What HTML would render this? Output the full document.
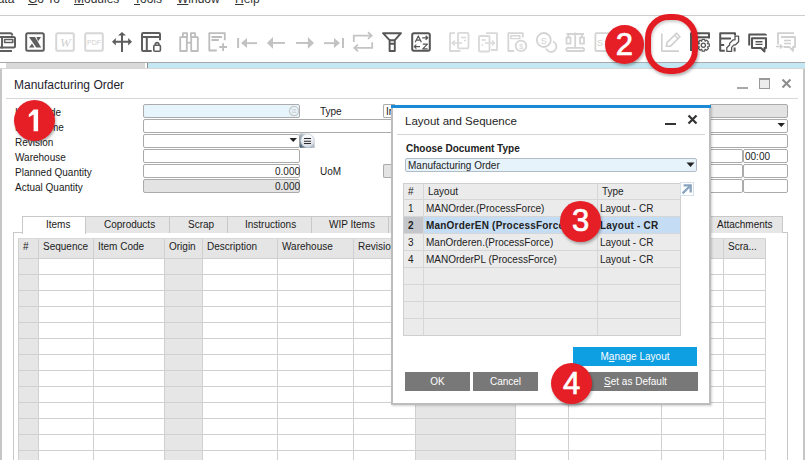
<!DOCTYPE html>
<html><head><meta charset="utf-8">
<style>
*{margin:0;padding:0;box-sizing:border-box}
html,body{width:805px;height:460px;overflow:hidden;background:#fff}
body{position:relative;font-family:"Liberation Sans",sans-serif;font-size:10px;color:#222}
.a{position:absolute}
.t{position:absolute;white-space:nowrap;line-height:12px;font-size:10px}
.menu{position:absolute;top:-8px;font-size:12px;line-height:14px;color:#333;white-space:nowrap}
.menu u{text-decoration:underline}
.hl{position:absolute;height:1px}
.vl{position:absolute;width:1px}
.fld{position:absolute;height:14px;border:1px solid #ababab;border-radius:2px;background:#fff}
.lab{position:absolute;left:15px;font-size:10px;line-height:15px;height:15px;white-space:nowrap;color:#1a1a1a}
.tab{position:absolute;top:216px;height:17px;background:#e6e6e6;border:1px solid #c8c8c8;border-bottom:none}
.tabt{position:absolute;top:219px;font-size:10px;line-height:12px;white-space:nowrap;color:#1a1a1a}
.circ{position:absolute;border-radius:50%;background:#e61f27;box-shadow:1px 2px 3px rgba(0,0,0,.3);color:#fff;text-align:center;font-size:31px;-webkit-text-stroke:0.7px #fff}
.btn{position:absolute;background:#787878;color:#fff;font-size:10px;text-align:center;line-height:19px;height:19px}
</style></head><body>

<!-- MENU -->
<div class="menu" style="left:-11px">Data</div>
<div class="menu" style="left:28px"><u>G</u>o To</div>
<div class="menu" style="left:74px"><u>M</u>odules</div>
<div class="menu" style="left:134px"><u>T</u>ools</div>
<div class="menu" style="left:177px"><u>W</u>indow</div>
<div class="menu" style="left:235px"><u>H</u>elp</div>
<div class="hl" style="left:0;top:15px;width:805px;background:#cdcdcd"></div>

<!-- TOOLBAR placeholder -->
<!--toolbar-->
<svg class="a" style="left:0;top:0" width="805" height="62" viewBox="0 0 805 62">
<g fill="none" stroke-linejoin="round">
<!-- printer (dark) -->
<g stroke="#5e5e5e" stroke-width="2">
<path d="M-2 33.3H10.5Q12 33.3 12.3 35.5"/>
<rect x="-4" y="36.9" width="19" height="10.6" rx="1.5"/>
<path d="M2 37V48.5"/>
<rect x="4.6" y="39.4" width="8.2" height="3.2" stroke-width="1.5"/>
<path d="M-2 51H12"/>
</g>
<!-- excel -->
<rect x="26.2" y="33.2" width="17.6" height="17.6" rx="1.5" stroke="#5e5e5e" stroke-width="2"/>
<path d="M29 37H35L41.2 47.6H36.2Z" fill="#5e5e5e"/>
<path d="M36.5 37H41L38 41.5Z M29 47.6L32 43.5L34.5 47.6Z" fill="#5e5e5e"/>
<!-- word (disabled) -->
<rect x="56.2" y="33.2" width="17.6" height="17.6" rx="1.5" stroke="#d6d6d6" stroke-width="2"/>
<text x="65.5" y="46.8" font-family="Liberation Serif" font-style="italic" font-size="13" fill="#d0d0d0" text-anchor="middle">W</text>
<!-- pdf -->
<rect x="85.2" y="33.2" width="17.6" height="17.6" rx="1.5" stroke="#d6d6d6" stroke-width="2"/>
<text x="94" y="44.8" font-family="Liberation Sans" font-size="7" fill="#d2d2d2" text-anchor="middle">PDF</text>
<!-- move -->
<g stroke="#5e5e5e" stroke-width="2"><path d="M122 35V52M114 41.8H130"/></g>
<path d="M118 35.6L122 32L126 35.6Z M112 41.8L115.8 38V45.6Z M132 41.8L128.2 38V45.6Z" fill="#5e5e5e"/>
<!-- lock table -->
<g stroke="#5e5e5e" stroke-width="2">
<path d="M160 40.3V34.2Q160 33 158.8 33H143.2Q142 33 142 34.2V49.8Q142 51 143.2 51H151.7"/>
<path d="M142 37H160M146.8 37V51"/>
<rect x="153.8" y="45.2" width="6.6" height="6" rx="1" stroke-width="1.6"/>
<path d="M155.3 45.2V43.8Q157.1 41.5 158.9 43.8V45.2" stroke-width="1.6"/>
</g>
<!-- binoculars -->
<g stroke="#bdbdbd" stroke-width="1.8">
<rect x="182.9" y="33.2" width="4.2" height="4"/>
<rect x="190.9" y="33.2" width="4.2" height="4"/>
<rect x="180.2" y="37.2" width="6.6" height="13.8"/>
<rect x="191.2" y="37.2" width="6.6" height="13.8"/>
<path d="M186.8 42.7H191.2"/>
</g>
<!-- new doc + -->
<g stroke="#bdbdbd" stroke-width="1.8">
<path d="M224.8 40.3V33.2H209.3V50.5H216.8"/>
<path d="M211.5 37H222M211.5 40H218.8M219.3 47H227M223.1 43.2V51"/>
</g>
<!-- first / prev / next / last -->
<g fill="#c2c2c2">
<rect x="237.1" y="38" width="2" height="10"/>
<path d="M241 43L247 38V48Z"/><rect x="246" y="42.2" width="11" height="1.9"/>
<path d="M266.9 42.9L273 37.1V48.7Z"/><rect x="272" y="42" width="13" height="1.9"/>
<path d="M314 42.9L307.9 37.1V48.7Z"/><rect x="296" y="42" width="13" height="1.9"/>
<path d="M340 43L334 38V48Z"/><rect x="324" y="42.2" width="11" height="1.9"/>
<rect x="342" y="38" width="2" height="10"/>
</g>
<!-- refresh -->
<g stroke="#c4c4c4" stroke-width="1.8">
<path d="M353.8 42V35.6H371.5M368 32.3L371.8 35.6L368 38.9"/>
<path d="M372.2 42.2V47.9H354.5M358 44.6L354.2 47.9L358 51.2"/>
</g>
<!-- filter -->
<g stroke="#555" stroke-width="1.9">
<path d="M383 33.2H401L394.8 40.2V51H389.6V40.2Z"/>
<path d="M389.6 40.2H394.8M389.6 43.7H394.8"/>
</g>
<!-- sort -->
<rect x="412.2" y="33.2" width="17.6" height="17.6" rx="1.8" stroke="#555" stroke-width="2"/>
<g stroke="#555" stroke-width="1.2">
<path d="M415.2 42.3L418.3 36L421.4 42.3M416.2 40.2H420.4"/>
<path d="M422.2 37.8H427.8M425.6 35.8L427.8 37.8L425.6 39.8"/>
<path d="M414.2 46.6H420M416.4 44.6L414.2 46.6L416.4 48.6"/>
<path d="M422.8 44.2H427.4L422.8 48.8H427.6"/>
</g>
<!-- base doc -->
<g stroke="#d9d9d9" stroke-width="1.8">
<path d="M455 33.2H450V51H460.5"/>
<rect x="458" y="32.8" width="10.5" height="15.5" rx="1"/>
<path d="M452 43H462M455 40.5L452 43L455 45.5M461 37.5H466M464 40.5H466" stroke-width="1.4"/>
</g>
<!-- target doc -->
<g stroke="#d9d9d9" stroke-width="1.8">
<path d="M486 33.2H497V50H491"/>
<rect x="479" y="36" width="10.5" height="15.5" rx="1"/>
<path d="M485 43H494.5M492 40.5L494.5 43L492 45.5M481.5 40H486M481.5 45H483" stroke-width="1.4"/>
</g>
<!-- payment -->
<g stroke="#d6d6d6" stroke-width="1.8">
<path d="M522.8 37.5V33.2H508.3V51H514"/>
<rect x="510.8" y="35.8" width="9" height="2.8" stroke-width="1.4"/>
<circle cx="521" cy="45.9" r="5.3"/>
</g>
<text x="521" y="48.8" font-family="Liberation Sans" font-size="7.5" fill="#d4d4d4" text-anchor="middle">$</text>
<!-- coins -->
<g stroke="#d4d4d4" stroke-width="1.8">
<path d="M546 48.5A5.4 5.4 0 1 0 553 41.5"/>
<circle cx="543.8" cy="40" r="7"/>
</g>
<text x="543.8" y="43.5" font-family="Liberation Sans" font-size="9" fill="#d0d0d0" text-anchor="middle">S</text>
<!-- balance -->
<g stroke="#d4d4d4" stroke-width="1.8">
<rect x="566.3" y="47.8" width="17.8" height="3.2" rx="1.6"/>
<path d="M575.2 32.5V47.8M566.5 34H584M568.3 34V37.5M582 34V37.5"/>
<rect x="566.5" y="37.5" width="4" height="6.2"/>
<rect x="580" y="37.5" width="4" height="6.2"/>
</g>
<!-- doc $ -->
<rect x="595.4" y="33.2" width="14" height="17.8" rx="1" stroke="#d4d4d4" stroke-width="1.8"/>
<text x="600" y="45.5" font-family="Liberation Sans" font-size="9" fill="#d0d0d0" text-anchor="middle">S</text>
<!-- pencil -->
<g stroke="#cfcfcf" stroke-width="1.6">
<path d="M661.8 33.6V51.1H679"/>
<path d="M666.3 46.3L667 42.6L676.5 33.2L680 36.7L670.5 46.1Z M674.5 35.2L678 38.7"/>
</g>
<!-- doc gear -->
<g stroke="#555" stroke-width="2">
<path d="M691 51V33.3H709V38.4M691 37.2H709"/>
</g>
<g transform="translate(703.4 45.2)"><path stroke="#555" stroke-width="1.2" d="M4.09 -1.61 L5.86 -1.31 L5.86 1.31 L4.09 1.61 L4.03 1.76 L5.07 3.21 L3.21 5.07 L1.76 4.03 L1.61 4.09 L1.31 5.86 L-1.31 5.86 L-1.61 4.09 L-1.76 4.03 L-3.21 5.07 L-5.07 3.21 L-4.03 1.76 L-4.09 1.61 L-5.86 1.31 L-5.86 -1.31 L-4.09 -1.61 L-4.03 -1.76 L-5.07 -3.21 L-3.21 -5.07 L-1.76 -4.03 L-1.61 -4.09 L-1.31 -5.86 L1.31 -5.86 L1.61 -4.09 L1.76 -4.03 L3.21 -5.07 L5.07 -3.21 L4.03 -1.76Z"/><circle r="2.1" stroke="#555" stroke-width="1.3"/></g>
<!-- doc wrench -->
<g stroke="#555" stroke-width="2">
<path d="M735 35.5V33.3H720.2V50.8H724.8M721 38.4H731M721 45.1H724.2M734.6 47.5V51.6"/>
</g>
<path d="M726.8 51.3V47.8L729.6 45V43.4L733.2 39.8H735V36.2H738.6V41.8L735.6 44.8H734.2L731.6 47.4V51.3Z" stroke="#555" stroke-width="1.3"/>

<!-- chat -->
<g stroke="#555" stroke-width="2">
<path d="M749.2 45.5V34.5H765Q766 34.5 766 35.5"/>
<path d="M752 38.3H766V48H764.5V51.5L761 48H752Z"/>
<path d="M755.5 41.7H762.5M755.5 44.4H762.5" stroke-width="1.4"/>
</g>
<!-- light chat -->
<g stroke="#d0d0d0" stroke-width="1.8">
<path d="M778 44.5V33.2H794"/>
<path d="M781 37H795V47H793V50.8L789.5 47H783.5"/>
<path d="M784 40.5H791M784 43.5H791M776 46.5H782M780 44.5L782.3 46.5L780 48.5" stroke-width="1.3"/>
</g>
</g>
</svg>

<!--/toolbar-->

<!-- TAB STRIP -->
<div class="hl" style="left:0;top:62px;width:805px;background:#a9a9a9"></div>
<div class="a" style="left:6px;top:63px;width:139px;height:5px;background:#d9d9d9"></div>
<div class="a" style="left:147px;top:63px;width:1px;height:5px;background:#8e8e8e"></div>
<div class="a" style="left:148px;top:63px;width:657px;height:5px;background:#c3e7f3"></div>
<div class="a" style="left:0;top:68px;width:805px;height:1px;background:#d6d6d6"></div>

<!-- WINDOW -->
<div class="a" style="left:0;top:69px;width:2px;height:391px;background:#c6c6c6"></div>
<div class="a" style="left:803px;top:69px;width:2px;height:391px;background:#c6c6c6"></div>
<div class="a" style="left:14px;top:78px;font-size:12px;line-height:14px;color:#1e1e2e;white-space:nowrap">Manufacturing Order</div>
<div class="a" style="left:737px;top:87px;width:11px;height:2px;background:#a8a8a8"></div>
<div class="a" style="left:759px;top:78px;width:11px;height:11px;border:1px solid #9a9a9a;border-top-width:2px;background:#ececec"></div>
<svg class="a" style="left:781px;top:78px" width="11" height="11"><path d="M1.5 1.5L9.5 9.5M9.5 1.5L1.5 9.5" stroke="#8c8c8c" stroke-width="2"/></svg>
<div class="hl" style="left:6px;top:98px;width:792px;background:#d8d8d8"></div>

<!-- LABELS -->
<div class="lab" style="top:105px">Item Code</div>
<div class="lab" style="top:120px">Item Name</div>
<div class="lab" style="top:135px">Revision</div>
<div class="lab" style="top:150px">Warehouse</div>
<div class="lab" style="top:165px">Planned Quantity</div>
<div class="lab" style="top:180px">Actual Quantity</div>

<!-- FIELDS -->
<div class="fld" style="left:143px;top:104px;width:157px;background:#e6f4fc"></div>
<svg class="a" style="left:288px;top:105px" width="12" height="12"><circle cx="6" cy="6" r="4.6" fill="none" stroke="#c8c8c8" stroke-width="1.2"/><path d="M3.8 4.8h4.4M3.8 7.2h4.4" stroke="#c8c8c8" stroke-width="1"/></svg>
<div class="fld" style="left:143px;top:119px;width:260px"></div>
<div class="fld" style="left:143px;top:134px;width:157px"></div>
<svg class="a" style="left:289px;top:137px" width="9" height="6"><path d="M0.5 1h7.5l-3.75 4z" fill="#222"/></svg>
<svg class="a" style="left:299px;top:133px" width="17" height="16"><defs><linearGradient id="gsq" x1="0" y1="1" x2="1" y2="0"><stop offset="0" stop-color="#3e5468"/><stop offset=".55" stop-color="#8a9aa8" stop-opacity=".6"/><stop offset="1" stop-color="#fff" stop-opacity="0"/></linearGradient><linearGradient id="gb" x1="0" y1="0" x2="0" y2="1"><stop offset="0" stop-color="#ffffff"/><stop offset="1" stop-color="#d2dae2"/></linearGradient></defs><rect x="0.8" y="0.3" width="15" height="14.5" fill="url(#gsq)"/><circle cx="8.5" cy="7.8" r="6.8" fill="url(#gb)" stroke="#b8c2cc" stroke-width=".6"/><path d="M5 5.5h7M5 8.3h7M5 10.5h7" stroke="#2a2a2a" stroke-width="1.1"/></svg>
<div class="fld" style="left:143px;top:149px;width:157px"></div>
<div class="fld" style="left:143px;top:164px;width:157px"></div>
<div class="t" style="left:275px;top:166px;line-height:12px">0.000</div>
<div class="fld" style="left:143px;top:179px;width:157px;background:#e3e3e3"></div>
<div class="t" style="left:275px;top:181px;line-height:12px">0.000</div>

<div class="lab" style="left:320px;top:104px">Type</div>
<div class="fld" style="left:383px;top:104px;width:12px;border-right:none;border-radius:2px 0 0 2px"></div>
<div class="t" style="left:386px;top:106px">In</div>
<div class="lab" style="left:320px;top:164px">UoM</div>
<div class="fld" style="left:383px;top:164px;width:12px;border-right:none;border-radius:2px 0 0 2px;background:#e3e3e3"></div>

<!-- right fields -->
<div class="fld" style="left:709px;top:104px;width:79px;background:#e3e3e3"></div>
<div class="fld" style="left:709px;top:119px;width:79px"></div>
<svg class="a" style="left:777px;top:122px" width="9" height="6"><path d="M0.5 1h7.5l-3.75 4z" fill="#222"/></svg>
<div class="fld" style="left:709px;top:134px;width:79px"></div>
<div class="fld" style="left:709px;top:149px;width:34px"></div>
<div class="fld" style="left:743px;top:149px;width:45px"></div>
<div class="t" style="left:745px;top:151px">00:00</div>
<div class="fld" style="left:709px;top:164px;width:34px"></div>
<div class="fld" style="left:743px;top:164px;width:45px"></div>
<div class="fld" style="left:709px;top:179px;width:34px"></div>
<div class="fld" style="left:743px;top:179px;width:45px"></div>

<!-- TABS -->
<!--tabs-->

<!--/tabs-->

<!-- GRID -->
<!--grid-->
<div class="a" style="left:13px;top:232px;width:775px;height:240px;border:1px solid #c8c8c8;background:#fff"></div>
<div class="a" style="left:22px;top:216px;width:64px;height:18px;border:1px solid #c8c8c8;border-bottom:none;background:#fff"></div>
<div class="tabt" style="left:46px">Items</div>
<div class="tab" style="left:85px;width:85px"></div>
<div class="tabt" style="left:104px">Coproducts</div>
<div class="tab" style="left:169px;width:59px"></div>
<div class="tabt" style="left:188px">Scrap</div>
<div class="tab" style="left:227px;width:85px"></div>
<div class="tabt" style="left:245px">Instructions</div>
<div class="tab" style="left:311px;width:78px"></div>
<div class="tabt" style="left:329px">WIP Items</div>
<div class="tab" style="left:388px;width:313px"></div>
<div class="tab" style="left:700px;width:83px"></div>
<div class="tabt" style="left:717px">Attachments</div>
<div class="a" style="left:18px;top:238px;width:748px;height:20px;background:#e5e5e5"></div>
<div class="a" style="left:18px;top:258px;width:20px;height:202px;background:#e6e6e6"></div>
<div class="a" style="left:164px;top:258px;width:38px;height:202px;background:#e6e6e6"></div>
<div class="a" style="left:415px;top:258px;width:100px;height:202px;background:#e6e6e6"></div>
<div class="vl" style="left:18px;top:238px;height:222px;background:#d0d0d0"></div>
<div class="vl" style="left:38px;top:238px;height:222px;background:#d0d0d0"></div>
<div class="vl" style="left:93px;top:238px;height:222px;background:#d0d0d0"></div>
<div class="vl" style="left:164px;top:238px;height:222px;background:#d0d0d0"></div>
<div class="vl" style="left:202px;top:238px;height:222px;background:#d0d0d0"></div>
<div class="vl" style="left:277px;top:238px;height:222px;background:#d0d0d0"></div>
<div class="vl" style="left:353px;top:238px;height:222px;background:#d0d0d0"></div>
<div class="vl" style="left:415px;top:238px;height:222px;background:#d0d0d0"></div>
<div class="vl" style="left:515px;top:238px;height:222px;background:#d0d0d0"></div>
<div class="vl" style="left:568px;top:238px;height:222px;background:#d0d0d0"></div>
<div class="vl" style="left:661px;top:238px;height:222px;background:#d0d0d0"></div>
<div class="vl" style="left:723px;top:238px;height:222px;background:#d0d0d0"></div>
<div class="vl" style="left:765px;top:238px;height:222px;background:#d0d0d0"></div>
<div class="hl" style="left:18px;top:238px;width:748px;background:#d8d8d8"></div>
<div class="hl" style="left:18px;top:258px;width:748px;background:#d0d0d0"></div>
<div class="hl" style="left:18px;top:274px;width:748px;background:#d0d0d0"></div>
<div class="hl" style="left:18px;top:290px;width:748px;background:#d0d0d0"></div>
<div class="hl" style="left:18px;top:306px;width:748px;background:#d0d0d0"></div>
<div class="hl" style="left:18px;top:322px;width:748px;background:#d0d0d0"></div>
<div class="hl" style="left:18px;top:338px;width:748px;background:#d0d0d0"></div>
<div class="hl" style="left:18px;top:354px;width:748px;background:#d0d0d0"></div>
<div class="hl" style="left:18px;top:370px;width:748px;background:#d0d0d0"></div>
<div class="hl" style="left:18px;top:386px;width:748px;background:#d0d0d0"></div>
<div class="hl" style="left:18px;top:402px;width:748px;background:#d0d0d0"></div>
<div class="hl" style="left:18px;top:418px;width:748px;background:#d0d0d0"></div>
<div class="hl" style="left:18px;top:434px;width:748px;background:#d0d0d0"></div>
<div class="hl" style="left:18px;top:450px;width:748px;background:#d0d0d0"></div>
<div class="t" style="left:23px;top:241px">#</div>
<div class="t" style="left:43px;top:241px">Sequence</div>
<div class="t" style="left:98px;top:241px">Item Code</div>
<div class="t" style="left:169px;top:241px">Origin</div>
<div class="t" style="left:207px;top:241px">Description</div>
<div class="t" style="left:282px;top:241px">Warehouse</div>
<div class="t" style="left:358px;top:241px">Revision</div>
<div class="t" style="left:728px;top:241px">Scra...</div>
<!--/grid-->

<!-- DIALOG -->
<!--dialog-->
<div class="a" style="left:391px;top:105px;width:320px;height:300px;background:#fff;border:2px solid #bdbdbd;border-top:none;box-shadow:1px 1px 2px rgba(0,0,0,.18)"></div>
<div class="a" style="left:391px;top:105px;width:320px;height:3px;background:#1a8ad4"></div>
<div class="a" style="left:405px;top:114px;font-size:11.5px;line-height:14px;white-space:nowrap;color:#1e1e1e">Layout and Sequence</div>
<div class="a" style="left:665px;top:123px;width:11px;height:2px;background:#333"></div>
<svg class="a" style="left:687px;top:114px" width="11" height="11"><path d="M1.5 1.5L9.5 9.5M9.5 1.5L1.5 9.5" stroke="#333" stroke-width="2.2"/></svg>
<div class="hl" style="left:397px;top:134px;width:308px;background:#d4d4d4"></div>
<div class="t" style="left:406px;top:143px;font-weight:bold">Choose Document Type</div>
<div class="a" style="left:405px;top:158px;width:292px;height:14px;border:1px solid #b2bcc6;border-radius:2px;background:#e7f3fb"></div>
<div class="t" style="left:408px;top:160px">Manufacturing Order</div>
<svg class="a" style="left:686px;top:162px" width="9" height="6"><path d="M0.5 0.5h8l-4 4.5z" fill="#222"/></svg>
<div class="a" style="left:403px;top:183px;width:278px;height:153px;background:#ebebeb;border:1px solid #cfcfcf"></div>
<div class="a" style="left:404px;top:217px;width:19px;height:17px;background:#c3c7cc"></div>
<div class="a" style="left:424px;top:217px;width:256px;height:17px;background:#c5ddf4"></div>
<div class="vl" style="left:423px;top:183px;height:152px;background:#d6d6d6"></div>
<div class="vl" style="left:597px;top:183px;height:152px;background:#d6d6d6"></div>
<div class="hl" style="left:403px;top:199px;width:277px;background:#d6d6d6"></div>
<div class="hl" style="left:403px;top:216px;width:277px;background:#d6d6d6"></div>
<div class="hl" style="left:403px;top:233px;width:277px;background:#d6d6d6"></div>
<div class="hl" style="left:403px;top:250px;width:277px;background:#d6d6d6"></div>
<div class="hl" style="left:403px;top:267px;width:277px;background:#d6d6d6"></div>
<div class="hl" style="left:403px;top:284px;width:277px;background:#d6d6d6"></div>
<div class="hl" style="left:403px;top:301px;width:277px;background:#d6d6d6"></div>
<div class="hl" style="left:403px;top:318px;width:277px;background:#d6d6d6"></div>
<div class="t" style="left:408px;top:186px">#</div>
<div class="t" style="left:428px;top:186px">Layout</div>
<div class="t" style="left:602px;top:186px">Type</div>
<div class="t" style="left:408px;top:203px">1</div>
<div class="t" style="left:426px;top:203px">MANOrder.(ProcessForce)</div>
<div class="t" style="left:600px;top:203px">Layout - CR</div>
<div class="t" style="left:408px;top:220px;font-weight:bold;letter-spacing:0.2px">2</div>
<div class="t" style="left:426px;top:220px;font-weight:bold;letter-spacing:0.2px">ManOrderEN (ProcessForce)</div>
<div class="t" style="left:600px;top:220px;font-weight:bold;letter-spacing:0.2px">Layout - CR</div>
<div class="t" style="left:408px;top:237px">3</div>
<div class="t" style="left:426px;top:237px">ManOrderen.(ProcessForce)</div>
<div class="t" style="left:600px;top:237px">Layout - CR</div>
<div class="t" style="left:408px;top:254px">4</div>
<div class="t" style="left:426px;top:254px">MANOrderPL (ProcessForce)</div>
<div class="t" style="left:600px;top:254px">Layout - CR</div>
<svg class="a" style="left:680px;top:182px" width="14" height="14"><rect x="0.5" y="0.5" width="13" height="13" fill="#fff" stroke="#d6e0ea"/><path d="M2.6 11.4L10 4" stroke="#88a3c0" stroke-width="2.2" fill="none"/><path d="M3.6 3.3H10.7V10.4" stroke="#88a3c0" stroke-width="2.3" fill="none"/></svg>
<div class="btn" style="left:405px;top:372px;width:65px">OK</div>
<div class="btn" style="left:473px;top:372px;width:65px">Cancel</div>
<div class="btn" style="left:573px;top:347px;width:124px;background:#0e9ee2">M<u>a</u>nage Layout</div>
<div class="btn" style="left:573px;top:372px;width:125px"><u>S</u>et as Default</div>
<!--/dialog-->

<!-- CIRCLES -->
<!--circles-->
<div class="circ" style="left:14.0px;top:99.5px;width:41.0px;height:41.0px;line-height:41.0px"><svg width="41" height="41" style="position:absolute;left:0;top:0" viewBox="14 99.5 41 41"><path d="M33.6 108.9H38.1V130.7H33.6V113.9L28.8 116.8V113.9Z" fill="#fff"/></svg></div>
<div class="circ" style="left:604.5px;top:24.499999999999996px;width:39.6px;height:39.6px;line-height:39.6px">2</div>
<div class="circ" style="left:560.4000000000001px;top:201.1px;width:40.6px;height:40.6px;line-height:40.6px">3</div>
<div class="circ" style="left:550.9px;top:362.90000000000003px;width:41.4px;height:41.4px;line-height:41.4px">4</div>
<div class="a" style="left:645px;top:14px;width:53px;height:60px;border:6px solid #e31b23;border-radius:24px;box-shadow:1px 2px 3px rgba(0,0,0,.3), inset 1px 2px 3px rgba(0,0,0,.2)"></div>
<!--/circles-->

</body></html>
